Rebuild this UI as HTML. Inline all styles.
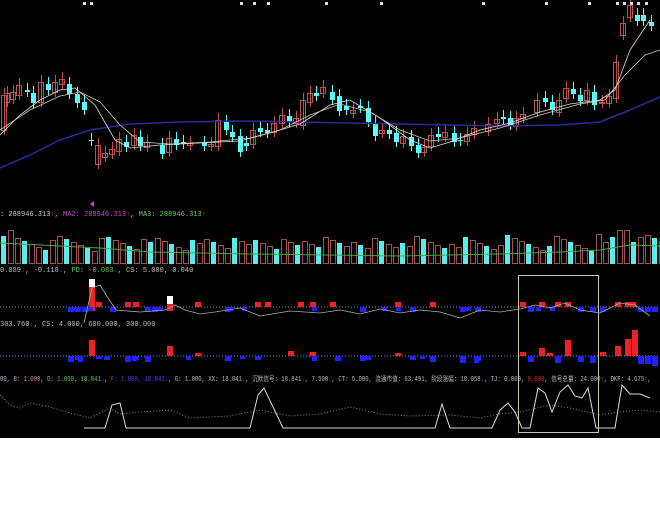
<!DOCTYPE html>
<html><head><meta charset="utf-8"><style>
html,body{margin:0;padding:0;background:#fff;width:660px;height:516px;overflow:hidden}
#c{position:absolute;left:0;top:0;width:660px;height:438px;background:#000;overflow:hidden}
svg{position:absolute;left:0;top:0}
.t{position:absolute;font:7px "Liberation Mono","Noto Sans CJK SC",monospace;white-space:nowrap;color:#bbb;line-height:8px;transform-origin:0 0}
</style></head><body>
<div id="c">
<svg id="s" width="660" height="438" xmlns="http://www.w3.org/2000/svg"></svg>
<div class="t" style="left:0;top:211px"><span style="color:#ccc">: 288946.313</span><span style="color:#d44">↑</span>, <span style="color:#c4c">MA2: 288946.313</span><span style="color:#d44">↑</span>, <span style="color:#6c6">MA3: 288946.313</span><span style="color:#d44">↑</span></div>
<div class="t" style="left:0;top:267px">0.089<span style="color:#44f">↓</span>, -0.118<span style="color:#44f">↓</span>, <span style="color:#6c6">PD: -0.083</span><span style="color:#44f">↓</span>, CS: 5.000, 0.040</div>
<div class="t" style="left:0;top:321px">303.760<span style="color:#44f">↓</span>, CS: 4.000, 600.000, 300.000</div>
<div class="t" style="left:0;top:376px;transform:scaleX(0.8)">00, <span style="color:#c8c">B: 1.000</span>, <span style="color:#6c6">D: 1.000, 18.841</span><span style="color:#44f">↓</span>, <span style="color:#44f">F: 1.000, 18.841</span><span style="color:#44f">↓</span>, G: 1.000, XX: 18.841<span style="color:#44f">↓</span>, 沉默信号: 18.841<span style="color:#44f">↓</span>, 7.500<span style="color:#44f">↓</span>, CT: 5.000, 流通市值: 63.491, 阶段涨幅: 18.058<span style="color:#44f">↓</span>, TJ: 0.000, <span style="color:#d33">0.000</span>, 信号总量: 24.000<span style="color:#d44">↑</span>, DKF: 4.675<span style="color:#d44">↑</span>,</div>
</div>
<script>
var S=document.getElementById('s'),h='';
function R(x,y,w,hh,f,st){h+='<rect x="'+x+'" y="'+y+'" width="'+w+'" height="'+Math.max(hh,1)+'" '+(st?'fill="none" stroke="'+st+'" stroke-width="1"':'fill="'+f+'"')+'/>';}
function L(pts,c,d,w){h+='<polyline fill="none" stroke="'+c+'" stroke-width="'+(w||1)+'" '+(d?'stroke-dasharray="'+d+'"':'')+' points="'+pts+'"/>';}
var cd=[[4,95,130,'r'],[7,93,102,'r'],[13,92,99,'r'],[19,85,95,'r'],[27,90,92,'c'],[33,93,103,'c'],[41,82,102,'r'],[48,84,90,'c'],[55,82,92,'r'],[62,79,84,'r'],[69,84,94,'c'],[77,94,103,'c'],[84,102,110,'c'],[91,140,141,'c'],[98,145,164,'r'],[105,153,157,'r'],[112,149,154,'r'],[119,139,151,'r'],[126,142,147,'c'],[134,135,145,'r'],[140,137,146,'c'],[147,142,147,'r'],[162,145,154,'c'],[169,138,152,'r'],[176,139,145,'c'],[183,142,144,'c'],[190,143,145,'r'],[204,143,146,'c'],[211,144,146,'r'],[218,120,146,'r'],[226,122,130,'c'],[232,132,137,'c'],[240,136,152,'c'],[246,143,146,'c'],[253,130,144,'r'],[260,128,132,'c'],[267,130,133,'c'],[274,123,132,'r'],[282,115,123,'r'],[289,116,122,'c'],[296,118,123,'r'],[303,100,125,'r'],[310,93,102,'r'],[316,93,96,'c'],[323,87,93,'r'],[332,92,100,'c'],[339,96,111,'c'],[346,106,110,'c'],[353,110,113,'r'],[360,106,108,'c'],[368,108,122,'c'],[375,123,136,'c'],[382,130,133,'r'],[389,130,134,'c'],[396,133,142,'c'],[403,136,143,'r'],[411,137,146,'c'],[418,145,153,'c'],[424,147,152,'r'],[431,135,146,'r'],[438,134,137,'c'],[445,132,137,'r'],[454,133,142,'c'],[460,140,141,'c'],[467,134,141,'r'],[474,128,134,'r'],[488,124,131,'r'],[497,119,123,'r'],[503,117,119,'c'],[510,118,125,'c'],[516,118,126,'r'],[523,114,118,'r'],[537,100,112,'r'],[545,98,102,'c'],[552,102,110,'c'],[559,100,112,'r'],[566,88,98,'r'],[573,89,94,'c'],[580,95,101,'c'],[587,90,100,'r'],[594,92,105,'c'],[602,102,103,'r'],[609,96,103,'r'],[616,62,98,'r'],[623,23,35,'r'],[630,5,17,'r'],[637,15,21,'c'],[643,15,21,'c'],[651,22,26,'c']];
cd.forEach(function(c,i){var col=c[3]=='r'?'#c05050':'#5ff';h+='<line x1="'+(c[0]+0.5)+'" x2="'+(c[0]+0.5)+'" y1="'+(c[1]-7)+'" y2="'+(c[2]+5)+'" stroke="'+col+'"/>';
if(c[3]=='r')R(c[0]-2.5,c[1]+.5,5,c[2]-c[1],0,col);else R(c[0]-2,c[1],5,c[2]-c[1],col);});
L('0,168 30,155 60,140 90,130 130,124 180,122 240,121 300,122 400,124 500,126 560,125 600,122 630,110 660,97','#2a2a9a',0,1.5);
L('0,135 20,115 40,100 60,90 75,88 95,105 115,140 130,148 160,145 200,143 240,141 270,133 300,124 330,105 350,100 380,118 410,140 430,148 450,142 480,130 510,123 540,112 570,104 600,100 615,90 630,50 650,20','#ddd',0,0.8);
L('0,130 30,110 60,96 80,92 100,102 120,125 140,142 170,144 210,142 250,138 280,130 310,115 340,104 370,112 400,130 430,141 460,138 500,128 540,115 580,104 605,100 625,75 645,55 660,50','#d8c8a8',0,0.8);
// volume
for(var i=0;i<95;i++){var x=1+i*7;var hv=12+((i*37)%13)+((i*13)%7);if(i==1)hv=34;if(i==0)hv=28;if(i==14)hv=26;if(i>85&&i<92)hv=22+((i*5)%10);if(i==88||i==89)hv=34;var c=((i*7)%3==0)?'c':'r';if(c=='c')R(x,264-hv,5,hv,'#5ee');else R(x+.5,264-hv+.5,5,hv-1,0,'#a05050');}
L('0,243 60,246 100,248 150,252 250,254 400,256 500,254 560,252 600,250 630,245 660,246','#4a4',0,1);
// panel1
L('0,307 660,307','#888','1,2');
var p1=[[68,'b'],[75,'b'],[82,'b'],[89,'R',279],[96,'r'],[110,'b'],[125,'r'],[133,'r'],[145,'b'],[152,'b'],[167,'R',296],[195,'r'],[225,'b'],[255,'r'],[265,'r'],[298,'r'],[310,'r'],[330,'r'],[360,'b'],[395,'r'],[410,'b'],[430,'r'],[460,'b'],[475,'b'],[520,'r'],[528,'b'],[539,'r'],[555,'r'],[565,'r'],[578,'b'],[590,'b'],[600,'b'],[615,'r'],[625,'r'],[630,'r'],[638,'b'],[645,'b'],[652,'b']];
p1.forEach(function(p){if(p[1]=='b')R(p[0],307,6,5,'#22f');else if(p[1]=='r')R(p[0],302,6,5,'#e22');else{R(p[0],p[2]+8,6,311-p[2]-8,'#e22');R(p[0],p[2],6,8,'#fff');}});
for(var x=60;x<600;x+=14){if((x*3)%11<3)R(x,307,5,4,'#22f');}
L('84,323 92,288 100,285 108,298 116,310 140,312 165,310 175,305 185,310 200,314 215,312 240,308 260,316 290,311 320,313 340,310 360,314 380,309 400,313 420,310 440,312 460,318 480,310 500,312 520,309 535,305 550,308 565,303 580,310 600,313 620,303 635,305 650,316','#aaa',0,0.8);
// panel2
L('0,356 660,356','#88f','1,2');
var p2=[[68,-6],[75,-4],[89,16],[96,-3],[104,-4],[125,-6],[133,-4],[145,-6],[167,10],[195,3],[225,-5],[255,-4],[288,5],[310,4],[335,-5],[360,-5],[395,3],[410,-4],[430,-6],[460,-7],[475,-5],[520,4],[528,-6],[539,8],[547,3],[555,-7],[565,16],[578,-6],[590,-7],[600,4],[615,10],[625,17],[632,26],[638,-8],[645,-8],[652,-10]];
p2.forEach(function(p){if(p[1]>0)R(p[0],356-p[1],6,p[1],'#e22');else R(p[0],356,6,-p[1],'#22f');});
for(var x=60;x<520;x+=18){if((x*7)%13<4)R(x,356,5,3+(x%5),'#22f');}
// panel3
L('0,395 10,405 20,408 30,403 50,407 70,413 90,418 110,408 120,414 140,412 170,410 190,418 230,416 260,410 290,416 320,414 350,407 380,414 410,416 450,415 480,418 500,414 520,412 550,405 570,408 600,415 620,412 640,410 660,412','#888','1,2');
L('84,428 105,428 112,405 120,403 126,428 250,428 258,395 264,388 283,428 435,428 442,404 450,428 492,428 500,410 508,403 515,412 522,428 530,428 538,388 545,393 552,412 560,392 568,385 575,396 582,398 588,388 596,428 615,428 622,385 630,394 640,394 650,398','#ddd',0,1);
h+='<rect x="518.5" y="275.5" width="80" height="157" fill="none" stroke="#c8c8a0" stroke-width="1"/>';
[83,90,240,253,267,325,380,482,545,588,616,623,630,637,645].forEach(function(x){R(x,2,3,3,'#ddd');});
h+='<polygon points="90,204 94,201 94,207" fill="#c4c"/>';
S.innerHTML=h;
</script>
</body></html>
